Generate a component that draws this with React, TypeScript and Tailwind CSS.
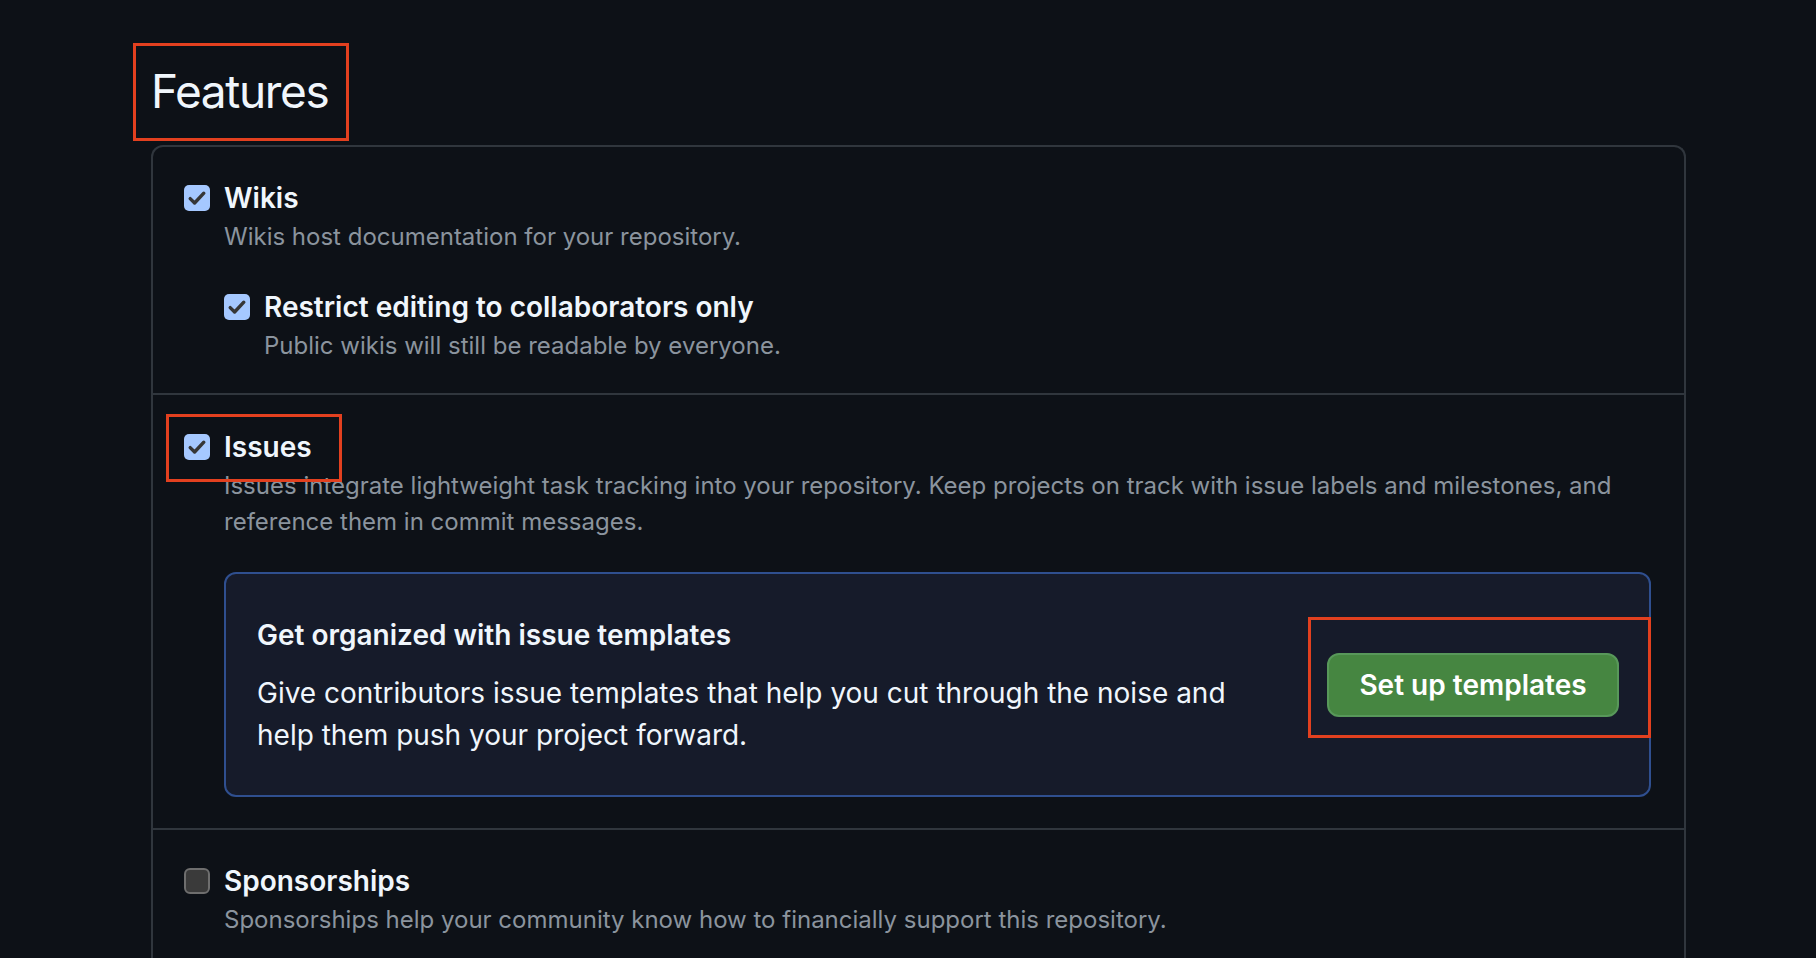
import React from "react";

function Check({ on }: { on: boolean }) {
  if (!on) {
    return (
      <span className="mt-[8px] block h-[26px] w-[26px] shrink-0 rounded-[6px] border-2 border-[#6e6e6e] bg-[#3a3a3a]" />
    );
  }
  return (
    <span className="mt-[8px] block h-[26px] w-[26px] shrink-0 rounded-[5px] bg-[#a5c8ff]">
      <svg width="26" height="26" viewBox="0 0 26 26" fill="none">
        <path d="M6.2 13.6 10.6 18 19.8 8.2" stroke="#363636" strokeWidth="3.4" strokeLinecap="round" strokeLinejoin="round" />
      </svg>
    </span>
  );
}

function Option({ on, title, children }: { on: boolean; title: string; children?: React.ReactNode }) {
  return (
    <div className="flex items-start gap-[14px]">
      <Check on={on} />
      <div className="flex-1">
        <div className="text-[28px] font-semibold leading-[42px] text-[#f0f6fc]">{title}</div>
        {children}
      </div>
    </div>
  );
}

const desc = "text-[24px] leading-[36px] text-[#8b949e]";

export default function App() {
  return (
    <div className="min-h-screen bg-[#0d1117] pl-[133px] pt-[43px] font-['Inter',sans-serif]">
      <div className="h-[98px] w-[216px] border-[3px] border-[#e2401f] pl-[15px] pt-[17px]">
        <h2 className="text-[46px] font-normal leading-[56px] tracking-[-0.03em] text-[#f0f6fc]">Features</h2>
      </div>

      <div className="ml-[18px] mt-[4px] w-[1535px] rounded-t-[12px] border-2 border-b-0 border-[#30363d] pb-[40px]">
        <section className="pb-[29px] pl-[31px] pr-[33px] pt-[30px]">
          <Option on title="Wikis">
            <p className={desc}>Wikis host documentation for your repository.</p>
            <div className="mt-[31px]">
              <Option on title="Restrict editing to collaborators only">
                <p className={desc}>Public wikis will still be readable by everyone.</p>
              </Option>
            </div>
          </Option>
        </section>

        <section className="relative border-t-2 border-[#30363d] pb-[31px] pl-[31px] pr-[33px] pt-[31px]">
          <div className="absolute left-[13px] top-[19px] h-[68px] w-[176px] border-[3px] border-[#e2401f]" />
          <Option on title="Issues">
            <p className={desc}>
              Issues integrate lightweight task tracking into your repository. Keep projects on track with issue labels and milestones, and reference them in commit messages.
            </p>
            <div className="relative mt-[32px] flex h-[225px] items-center justify-between rounded-[12px] border-2 border-[#2f4f8f] bg-[#161b2a] pl-[31px] pr-[30px]">
              <div>
                <h3 className="text-[28px] font-semibold leading-[42px] text-[#f0f6fc]">Get organized with issue templates</h3>
                <p className="mt-[16px] max-w-[1000px] text-[28px] leading-[42px] text-[#f0f6fc]">
                  Give contributors issue templates that help you cut through the noise and help them push your project forward.
                </p>
              </div>
              <button className="h-[64px] w-[292px] rounded-[12px] border-2 border-[#58985a] bg-[#468641] text-[28px] font-semibold text-white">
                Set up templates
              </button>
              <div className="absolute right-[-2px] top-[43px] h-[121px] w-[343px] border-[3px] border-[#e2401f]" />
            </div>
          </Option>
        </section>

        <section className="border-t-2 border-[#30363d] pl-[31px] pr-[33px] pt-[30px]">
          <Option on={false} title="Sponsorships">
            <p className={desc}>Sponsorships help your community know how to financially support this repository.</p>
          </Option>
        </section>
      </div>
    </div>
  );
}
